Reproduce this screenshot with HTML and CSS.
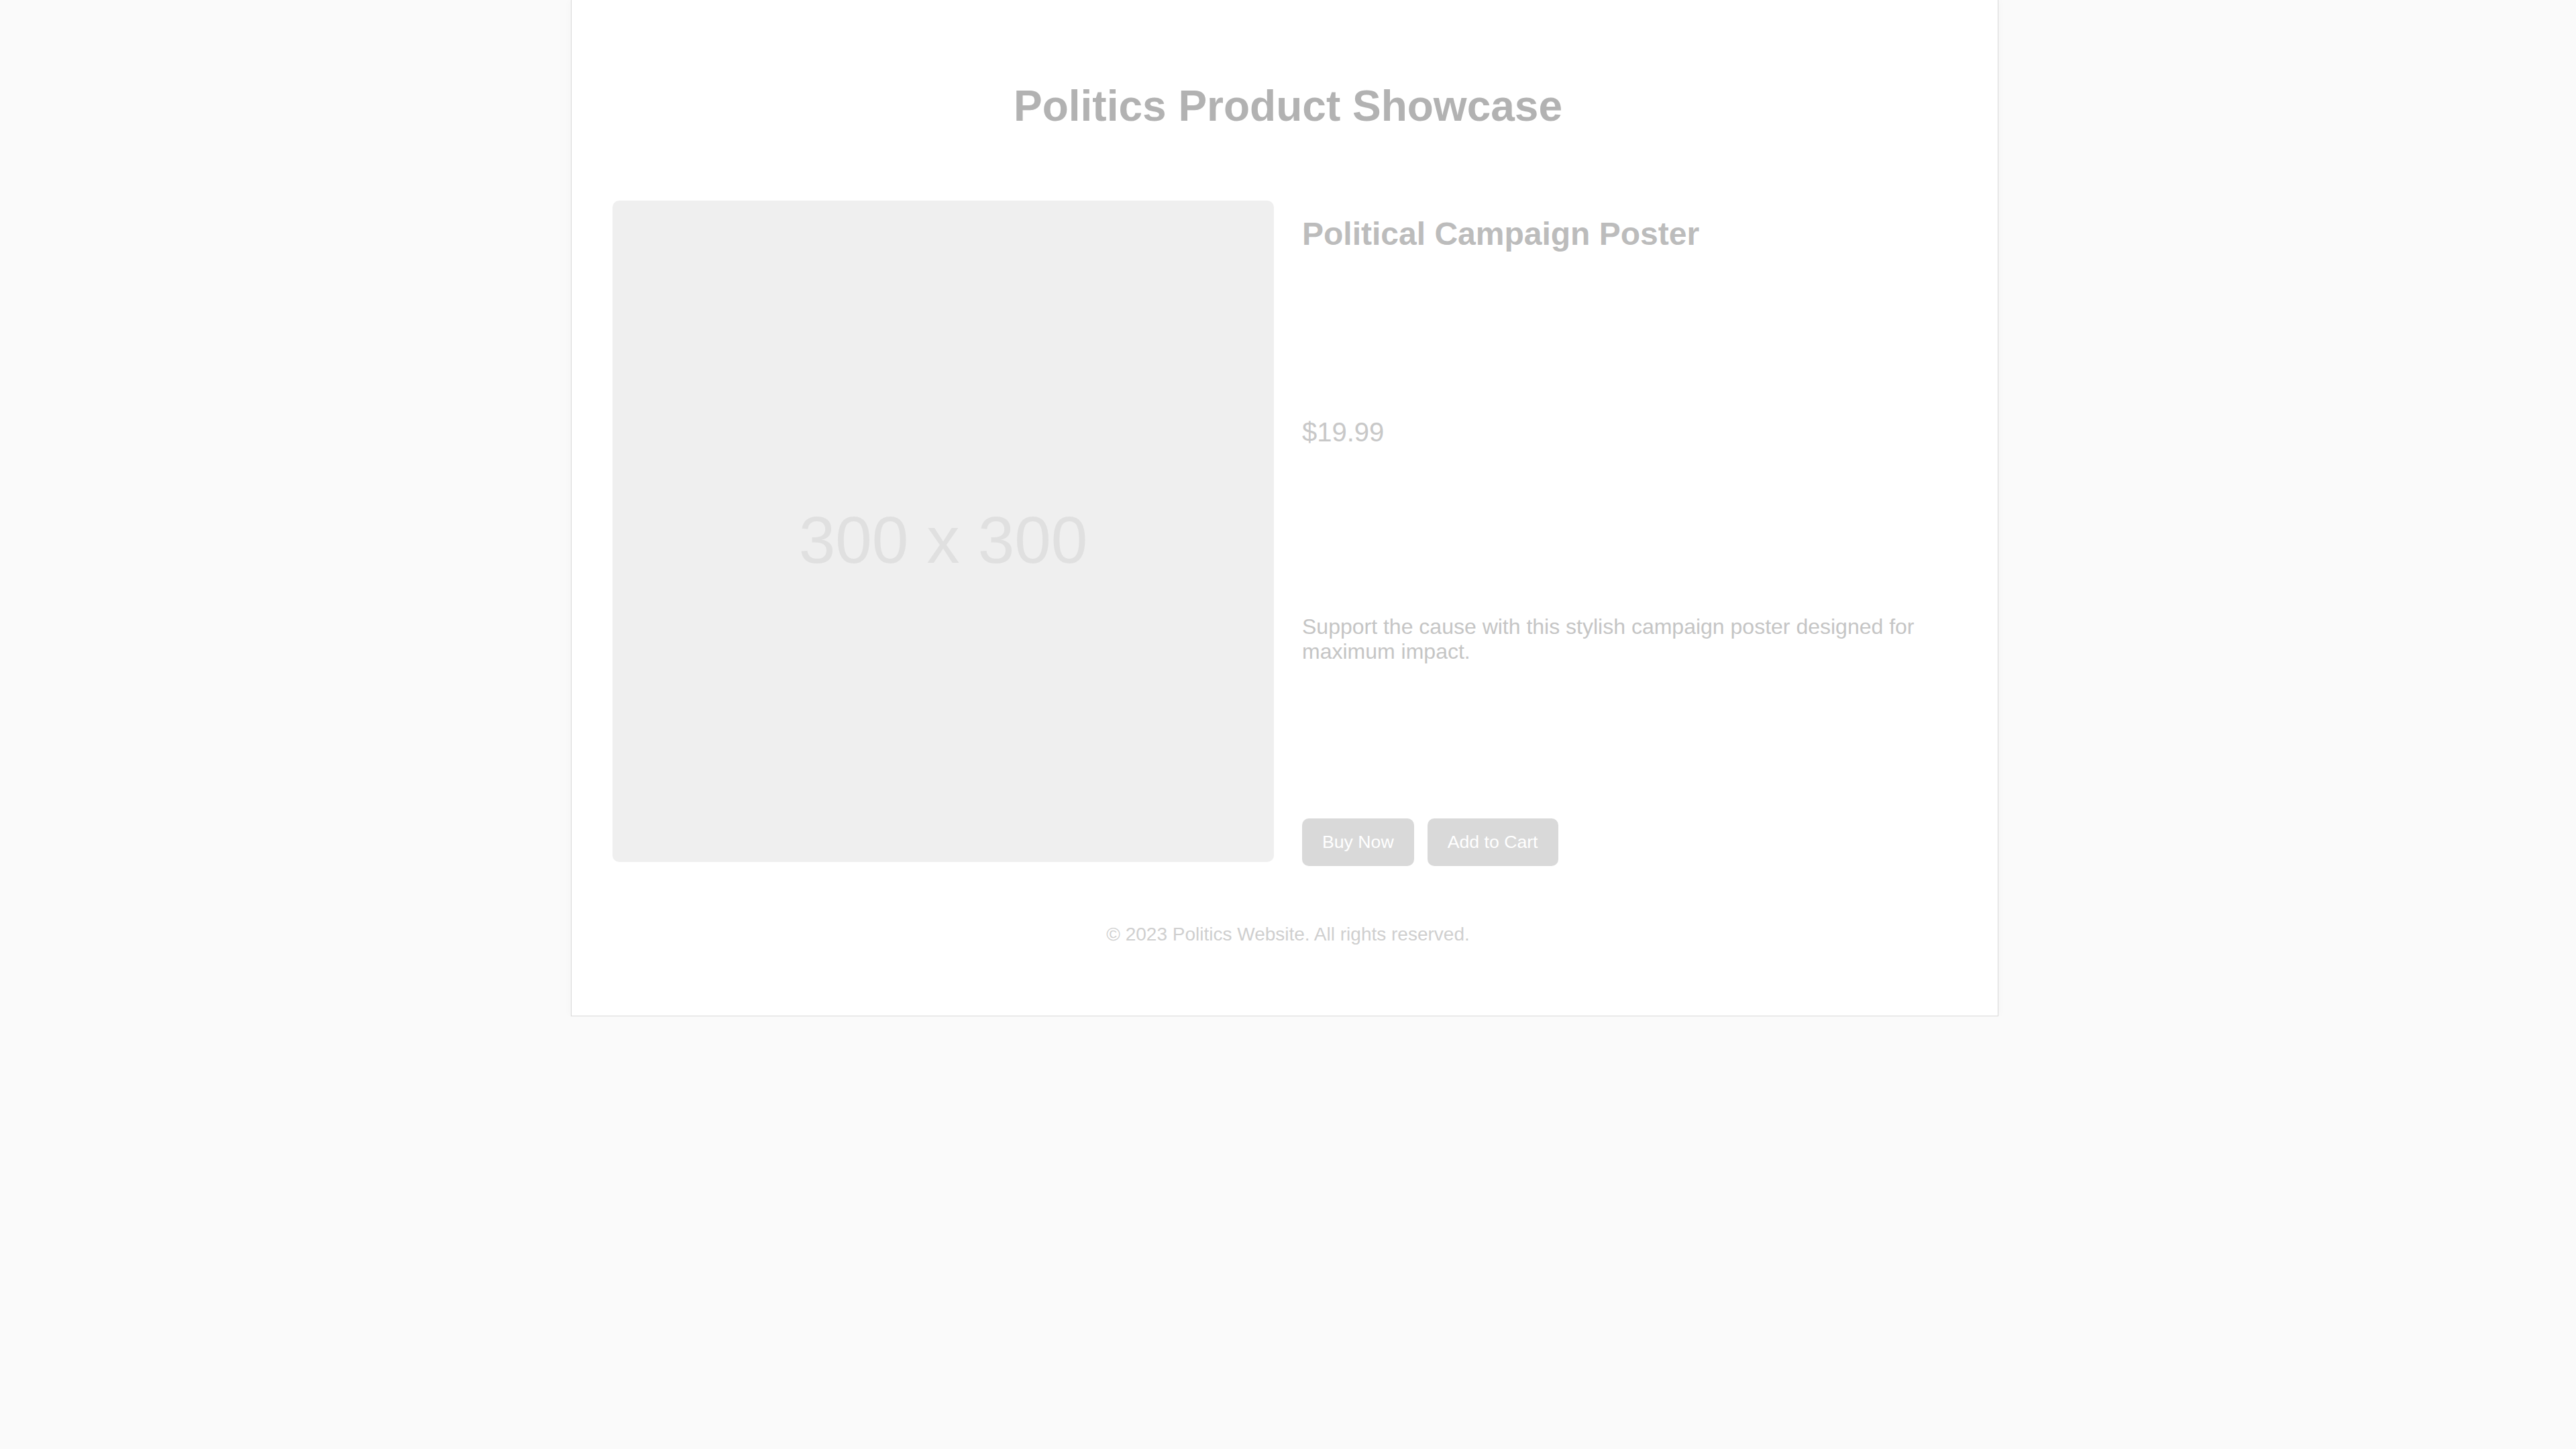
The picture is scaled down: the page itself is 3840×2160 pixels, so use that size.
FILE: index.html
```html
<!DOCTYPE html>
<html lang="en">
<head>
<meta charset="utf-8">
<title>Politics Product Showcase</title>
<link rel="stylesheet" href="styles.css">
</head>
<body>
<div class="container">
  <h1 class="page-title">Politics Product Showcase</h1>
  <section class="product">
    <div class="product-image"><span class="placeholder-text">300 x 300</span></div>
    <div class="product-details">
      <h2 class="product-name">Political Campaign Poster</h2>
      <p class="product-price">$19.99</p>
      <p class="product-desc">Support the cause with this stylish campaign poster designed for maximum impact.</p>
      <div class="actions">
        <button class="btn">Buy Now</button>
        <button class="btn">Add to Cart</button>
      </div>
    </div>
  </section>
  <footer class="footer">© 2023 Politics Website. All rights reserved.</footer>
</div>
</body>
</html>
```

FILE: styles.css
```css
html, body {
  margin: 0;
  padding: 0;
}
body {
  background: #fafafa;
  font-family: "Liberation Sans", Arial, sans-serif;
  font-size: 32px;
  color: #c5c5c5;
}
.container {
  box-sizing: border-box;
  width: 2128px;
  margin: 0 0 0 calc(50% - 1069px);
  padding: 122px 51px 105px 61px;
  background: #ffffff;
  border: 1px solid #d8d8d8;
  border-top: none;
  box-shadow: 0 0 12px rgba(0, 0, 0, 0.03);
}
.page-title {
  margin: 0 0 103px;
  font-size: 64px;
  font-weight: bold;
  line-height: 73.6px;
  text-align: center;
  color: #b2b2b2;
}
.product {
  display: grid;
  grid-template-columns: 1fr 1fr;
  column-gap: 42px;
  align-items: start;
}
.product-image {
  aspect-ratio: 1 / 1;
  background: #efefef;
  border-radius: 10px;
  display: flex;
  align-items: center;
  justify-content: center;
  padding-top: 26px;
  box-sizing: border-box;
}
.placeholder-text {
  font-size: 98px;
  color: #e0e0e0;
  line-height: 1;
}
.product-details {
  display: flex;
  flex-direction: column;
  align-items: flex-start;
}
.product-name {
  margin: 22px 0 0;
  font-size: 48px;
  font-weight: bold;
  line-height: 55px;
  color: #bcbcbc;
}
.product-price {
  margin: 245px 0 0;
  font-size: 40px;
  line-height: 46px;
  color: #c8c8c8;
}
.product-desc {
  margin: 249px 0 0;
  font-size: 32px;
  line-height: 37px;
  color: #c5c5c5;
}
.actions {
  display: flex;
  gap: 20px;
  margin-top: 230px;
}
.btn {
  font-family: "Liberation Sans", Arial, sans-serif;
  font-size: 26.67px;
  line-height: 31px;
  padding: 20px 30px;
  border: none;
  border-radius: 10px;
  background: #d9d9d9;
  color: #ffffff;
}
.footer {
  margin-top: 86px;
  text-align: center;
  font-size: 28px;
  line-height: 32px;
  color: #cfcfcf;
}
```
